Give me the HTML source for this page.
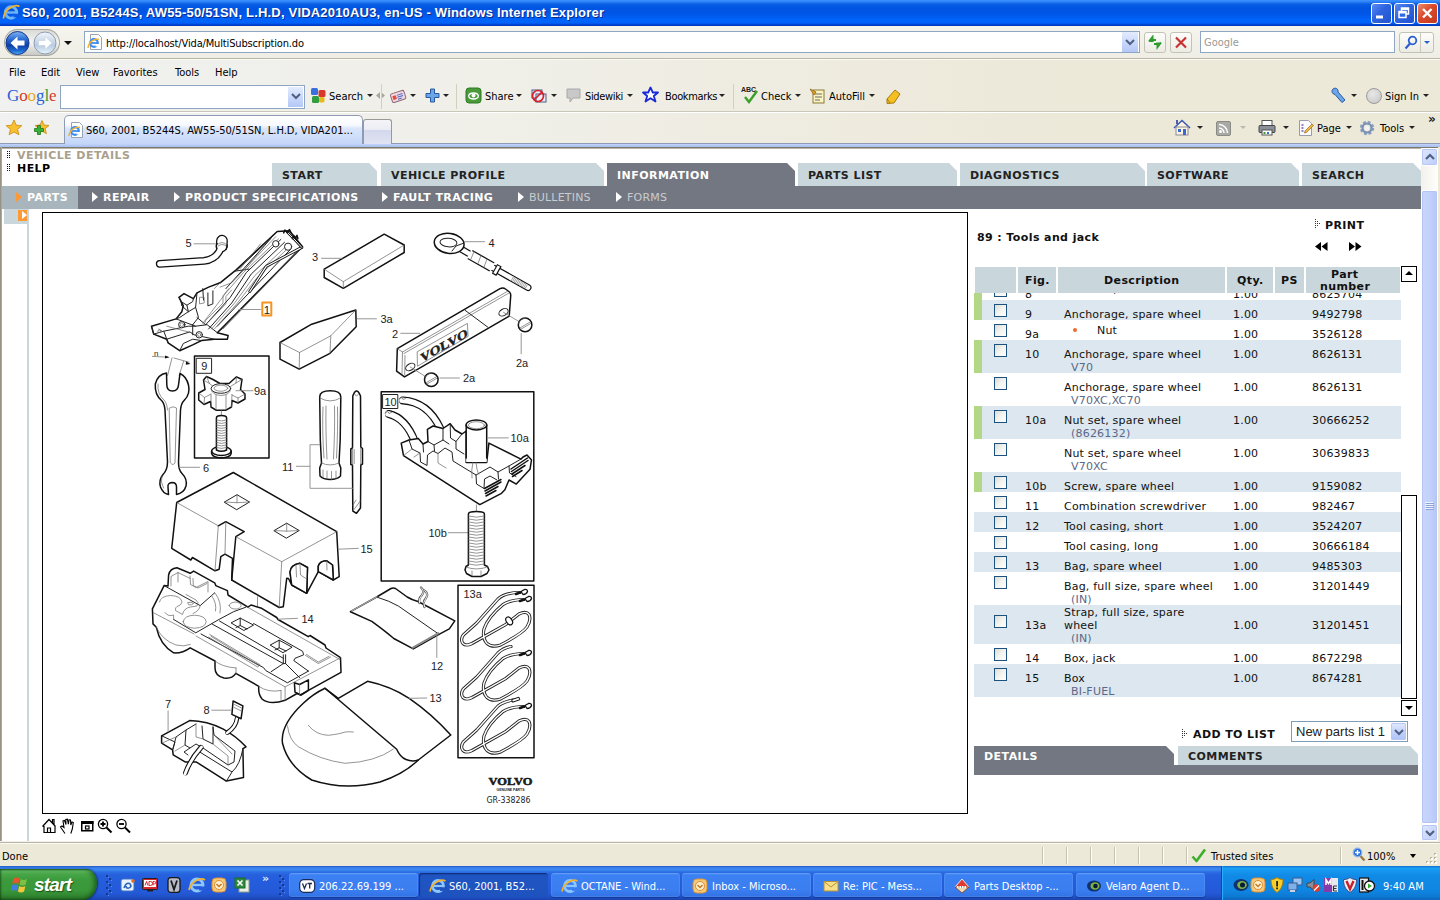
<!DOCTYPE html>
<html><head><meta charset="utf-8"><title>S60, 2001, B5244S</title>
<style>
html,body{margin:0;padding:0}
body{width:1440px;height:900px;overflow:hidden;position:relative;background:#fff;font-family:"DejaVu Sans","Liberation Sans",sans-serif;font-size:11px;color:#000}
.a{position:absolute}
.ui{font-family:"DejaVu Sans Condensed","DejaVu Sans","Liberation Sans",sans-serif;font-size:11px;white-space:nowrap}
.b{font-weight:bold}
.nw{white-space:nowrap}
/* chrome */
#title{left:0;top:0;width:1440px;height:26px;background:linear-gradient(#3d93ff 0,#2a7ff5 2px,#0a5fe3 4px,#0054e0 8px,#0056e6 14px,#0064fc 20px,#0062f8 23px,#0048d4 24.5px,#0034b8 26px)}
#navbar{left:0;top:26px;width:1440px;height:32px;background:linear-gradient(#f6f5ee,#f2f1e9 50%,#efeee5)}
#menubar{left:0;top:59px;width:1440px;height:52px;background:linear-gradient(90deg,#f0f1f0,#f0efe8 35%,#ede9da 70%,#ece9d8)}
#tabrow{left:0;top:112px;width:1440px;height:32px;background:linear-gradient(90deg,#f0f1f0,#f0efe8 35%,#ede9da 70%,#ece9d8)}
</style></head><body>
<div class="a" id="title"></div>
<div class="a" id="navbar"></div>
<div class="a" id="menubar"></div>
<div class="a" id="tabrow"></div>

<style>
#page{left:0;top:144px;width:1440px;height:700px;background:#fff}
.tab{position:absolute;top:163px;height:23px;background:#c9d6dc;font-weight:bold;letter-spacing:.45px;color:#222;line-height:23px;white-space:nowrap;clip-path:polygon(0 0,calc(100% - 8px) 0,100% 8px,100% 100%,0 100%)}
.tab span{position:absolute;left:10px;top:1px}
.tab.sel{background:#737781;color:#fff}
#subbar{left:2px;top:186px;width:1419px;height:23px;background:#737781}
.sm{position:absolute;top:187px;height:22px;line-height:22px;color:#fff;font-weight:bold;letter-spacing:.42px;white-space:nowrap}
.sm i{position:absolute;left:-11px;top:5px;width:0;height:0;border-left:6px solid #fff;border-top:5px solid transparent;border-bottom:5px solid transparent}
.sm.dis{font-weight:normal;color:#c9ccd1;letter-spacing:.2px}
</style>
<div class="a" id="page"></div>
<!--CHROME-->
<svg class="a" style="left:2px;top:3px" width="20" height="20"><circle cx="9" cy="9.500" r="5.700" fill="none" stroke="#6db4f5" stroke-width="3"/><path d="M4.500 9.500h10" stroke="#6db4f5" stroke-width="2.400"/><rect x="11.500" y="10.800" width="6" height="3.500" fill="#0a5ae4"/><path d="M1.500 15.500c.5-9 11-15 16-12" stroke="#f4b22c" stroke-width="1.800" fill="none"/></svg>
<div class="a nw" style="left:22px;top:4px;font:bold 13px/18px 'Liberation Sans',sans-serif;color:#fff;letter-spacing:.19px;text-shadow:1px 1px 0 #0a2a8a">S60, 2001, B5244S, AW55-50/51SN, L.H.D, VIDA2010AU3, en-US - Windows Internet Explorer</div>
<div class="a" style="left:1371px;top:3px;width:19px;height:19px;border:1px solid #fff;border-radius:3px;background:linear-gradient(135deg,#5a8af5,#2e63e0 45%,#2253d0)"></div>
<svg class="a" style="left:1371px;top:3px" width="21" height="21"><path d="M5 14h7" stroke="#fff" stroke-width="3"/></svg>
<div class="a" style="left:1394px;top:3px;width:19px;height:19px;border:1px solid #fff;border-radius:3px;background:linear-gradient(135deg,#5a8af5,#2e63e0 45%,#2253d0)"></div>
<svg class="a" style="left:1394px;top:3px" width="21" height="21"><rect x="7.500" y="5" width="7" height="6" fill="none" stroke="#fff" stroke-width="1.500"/><path d="M7.500 6h7" stroke="#fff" stroke-width="2"/><rect x="5" y="8.500" width="7" height="6" fill="#2e6ae8" stroke="#fff" stroke-width="1.500"/><path d="M5 9.500h7" stroke="#fff" stroke-width="2"/></svg>
<div class="a" style="left:1417px;top:3px;width:19px;height:19px;border:1px solid #fff;border-radius:3px;background:linear-gradient(135deg,#ec8a6a,#d9492a 45%,#c23a1c)"></div>
<svg class="a" style="left:1417px;top:3px" width="21" height="21"><path d="M6 6l8.500 8.500M14.500 6L6 14.500" stroke="#fff" stroke-width="2.400"/></svg>
<div class="a" style="left:0;top:58px;width:1440px;height:1px;background:#bab7a6"></div><div class="a" style="left:0;top:59px;width:1440px;height:1px;background:#fbfaf6"></div>
<div class="a" style="left:4px;top:29px;width:56px;height:27px;border-radius:14px;background:linear-gradient(#d8d8d4,#f4f4f2 50%,#c4c4c0);box-shadow:inset 0 0 0 1px #a8a8a4"></div>
<svg class="a" style="left:5px;top:30px" width="56" height="26"><defs><linearGradient id="bk" x1="0" y1="0" x2="0" y2="1"><stop offset="0" stop-color="#7fb2f2"/><stop offset=".35" stop-color="#2a6bd2"/><stop offset=".6" stop-color="#0f3fa6"/><stop offset=".85" stop-color="#1f6fd6"/><stop offset="1" stop-color="#5ab8f2"/></linearGradient><linearGradient id="fw" x1="0" y1="0" x2="0" y2="1"><stop offset="0" stop-color="#f4f7fb"/><stop offset=".45" stop-color="#c9d6e6"/><stop offset=".6" stop-color="#b9cce2"/><stop offset="1" stop-color="#e6f6fc"/></linearGradient></defs><circle cx="12.500" cy="13" r="11.500" fill="url(#bk)" stroke="#17398a"/><path d="M5.500 13l7-6.500v4h7v5h-7v4z" fill="#fff"/><circle cx="40" cy="13" r="11" fill="url(#fw)" stroke="#8f9db4"/><path d="M47 13l-7-6.500v4h-6.500v5h6.500v4z" fill="#fff" stroke="#c4d0e0" stroke-width=".6"/></svg>
<div class="a" style="left:64px;top:41px;width:0;height:0;border-top:4px solid #111;border-left:4px solid transparent;border-right:4px solid transparent"></div>
<div class="a" style="left:84px;top:31px;width:1054px;height:20px;border:1px solid #8ea6c4;background:#fff"></div>
<svg class="a" style="left:87px;top:33px" width="17" height="18"><path d="M3.500 1.500h8l3 3v12h-11z" fill="#fff" stroke="#9aa4b0"/><circle cx="7" cy="10" r="3.800" fill="none" stroke="#3d8df0" stroke-width="2.200"/><path d="M3.500 10h7.500" stroke="#3d8df0" stroke-width="1.800"/><rect x="8.500" y="11" width="4" height="2.500" fill="#fff"/><path d="M1 15c.5-6 7-10 11-8.500" stroke="#f4b22c" stroke-width="1.400" fill="none"/></svg>
<div class="a ui" style="left:106px;top:37px;line-height:13px;letter-spacing:-.15px">http://localhost/Vida/MultiSubscription.do</div>
<div class="a" style="left:1122px;top:32px;width:16px;height:20px;background:linear-gradient(#e4ecfd,#c6d5fb 60%,#b4c7f6)"></div>
<svg class="a" style="left:1125px;top:39px" width="10" height="7"><path d="M1 1l4 4 4-4" stroke="#4d6185" stroke-width="2" fill="none"/></svg>
<div class="a" style="left:1144px;top:32px;width:20px;height:19px;border:1px solid #c4c2b6;border-radius:3px;background:linear-gradient(#fdfdfb,#ecebe3)"></div>
<div class="a" style="left:1170px;top:32px;width:20px;height:19px;border:1px solid #c4c2b6;border-radius:3px;background:linear-gradient(#fdfdfb,#ecebe3)"></div>
<svg class="a" style="left:1147px;top:35px" width="16" height="15"><path d="M2 6.500l3.500-4.500v3h3.500" stroke="#2f9e2f" stroke-width="2" fill="none"/><path d="M2 7h5l-2.500-4z" fill="#2f9e2f"/><path d="M14 8.500l-3.500 4.500v-3h-3.500" stroke="#2f9e2f" stroke-width="2" fill="none" transform="translate(0,-1)"/><path d="M14 7.500h-5l2.500 4.500z" fill="#2f9e2f"/></svg>
<svg class="a" style="left:1174px;top:36px" width="14" height="13"><path d="M2 1.500l10 10M12 1.500l-10 10" stroke="#c83232" stroke-width="2.200"/></svg>
<div class="a" style="left:1200px;top:31px;width:193px;height:20px;border:1px solid #8ea6c4;background:#fff"></div>
<div class="a ui" style="left:1204px;top:36px;line-height:13px;color:#9a9a94">Google</div>
<div class="a" style="left:1399px;top:32px;width:33px;height:19px;border:1px solid #c4c2b6;border-radius:3px;background:linear-gradient(#fdfdfb,#ecebe3)"></div><div class="a" style="left:1420px;top:33px;width:1px;height:19px;background:#c9c7ba"></div>
<svg class="a" style="left:1403px;top:35px" width="16" height="15"><circle cx="9.500" cy="5.500" r="3.800" fill="none" stroke="#2a5fd0" stroke-width="1.800"/><path d="M7 8.500l-4.500 5" stroke="#2a5fd0" stroke-width="2.200"/></svg>
<div class="a" style="left:1424px;top:41px;width:0;height:0;border-top:3px solid #2a5fd0;border-left:3px solid transparent;border-right:3px solid transparent"></div>
<div class="a ui" style="left:9px;top:66px;line-height:13px">File</div>
<div class="a ui" style="left:41px;top:66px;line-height:13px">Edit</div>
<div class="a ui" style="left:76px;top:66px;line-height:13px">View</div>
<div class="a ui" style="left:113px;top:66px;line-height:13px">Favorites</div>
<div class="a ui" style="left:175px;top:66px;line-height:13px">Tools</div>
<div class="a ui" style="left:215px;top:66px;line-height:13px">Help</div>
<div class="a nw" style="left:7px;top:85px;font:17px/22px 'Liberation Serif',serif;letter-spacing:-.1px"><span style="color:#2a5fd8">G</span><span style="color:#d8382c">o</span><span style="color:#e8a820">o</span><span style="color:#2a5fd8">g</span><span style="color:#2f9e3f">l</span><span style="color:#d8382c">e</span></div>
<div class="a" style="left:60px;top:85px;width:243px;height:22px;border:1px solid #8ea6c4;background:#fff"></div>
<div class="a" style="left:288px;top:87px;width:15px;height:20px;background:linear-gradient(#e4ecfd,#c6d5fb 60%,#b4c7f6)"></div>
<svg class="a" style="left:291px;top:93px" width="10" height="7"><path d="M1 1l4 4 4-4" stroke="#4d6185" stroke-width="2" fill="none"/></svg>
<svg class="a" style="left:310px;top:87px" width="18" height="18"><rect x="1" y="1" width="7" height="7" rx="1.500" fill="#3a6fe0"/><rect x="8.500" y="3" width="7" height="7" rx="1.500" fill="#d8382c"/><rect x="2" y="9" width="7" height="7" rx="1.500" fill="#2f9e3f"/><rect x="9" y="10" width="5.500" height="5.500" rx="1.500" fill="#e8b820"/></svg>
<div class="a ui" style="left:329px;top:90px;line-height:13px;color:#000">Search</div>
<div class="a" style="left:367px;top:94px;width:0;height:0;border-top:3px solid #222;border-left:3px solid transparent;border-right:3px solid transparent"></div>
<svg class="a" style="left:376px;top:92px" width="9" height="8"><path d="M4 0v7L0 3.500zM5 0v7l4-3.500z" fill="#a8a8a0"/></svg>
<div class="a" style="left:381px;top:84px;width:1px;height:25px;background:#d4d0c0"></div>
<svg class="a" style="left:389px;top:87px" width="18" height="18"><g transform="rotate(-18 9 9)"><rect x="2" y="5" width="14" height="9" rx="1.500" fill="#f2d8dc" stroke="#8a6a7a"/><rect x="3.500" y="7.500" width="3.500" height="4" fill="#e84a3a"/><path d="M8 8h6M8 10h6M8 12h4" stroke="#4a6ad0" stroke-width="1"/></g></svg>
<div class="a" style="left:410px;top:94px;width:0;height:0;border-top:3px solid #222;border-left:3px solid transparent;border-right:3px solid transparent"></div>
<svg class="a" style="left:424px;top:87px" width="18" height="18"><path d="M6.500 2h4v4.500H15v4h-4.500V15h-4v-4.500H2v-4h4.500z" fill="#6aa6e8" stroke="#2a5a9e"/></svg>
<div class="a" style="left:443px;top:94px;width:0;height:0;border-top:3px solid #222;border-left:3px solid transparent;border-right:3px solid transparent"></div>
<div class="a" style="left:456px;top:84px;width:1px;height:25px;background:#d4d0c0"></div>
<svg class="a" style="left:465px;top:87px" width="18" height="18"><rect x="1" y="1" width="15" height="15" rx="3" fill="#4a9a3a" stroke="#2f7a24"/><circle cx="8.500" cy="8.500" r="2" fill="#fff"/><path d="M3.500 9c1-4 9-4 10 0M3.500 9c1 4 9 4 10 0" stroke="#fff" stroke-width="1.300" fill="none"/></svg>
<div class="a ui" style="left:485px;top:90px;line-height:13px;color:#000">Share</div>
<div class="a" style="left:516px;top:94px;width:0;height:0;border-top:3px solid #222;border-left:3px solid transparent;border-right:3px solid transparent"></div>
<svg class="a" style="left:530px;top:87px" width="18" height="18"><rect x="2" y="3" width="10" height="8" fill="#e8eef8" stroke="#4a5a8a"/><rect x="6" y="7" width="10" height="8" fill="#e8eef8" stroke="#4a5a8a"/><circle cx="8" cy="9" r="5.500" fill="none" stroke="#d8202a" stroke-width="1.700"/><path d="M4 13l8-8" stroke="#d8202a" stroke-width="1.700"/></svg>
<div class="a" style="left:551px;top:94px;width:0;height:0;border-top:3px solid #222;border-left:3px solid transparent;border-right:3px solid transparent"></div>
<svg class="a" style="left:565px;top:87px" width="18" height="18"><path d="M2 2h13v9H8l-3 4v-4H2z" fill="#c8c8c8" stroke="#a8a8a8"/></svg>
<div class="a ui" style="left:585px;top:90px;line-height:13px;color:#000;letter-spacing:-.35px">Sidewiki</div>
<div class="a" style="left:627px;top:94px;width:0;height:0;border-top:3px solid #222;border-left:3px solid transparent;border-right:3px solid transparent"></div>
<svg class="a" style="left:641px;top:86px" width="19" height="19"><path d="M9.500 1.500l2.300 5h5.200l-4.200 3.500 1.700 5.500-5-3.300-5 3.300 1.700-5.500L2 6.500h5.200z" fill="#fff" stroke="#1a2ad8" stroke-width="1.800" stroke-linejoin="round"/></svg>
<div class="a ui" style="left:665px;top:90px;line-height:13px;color:#000;letter-spacing:-.35px">Bookmarks</div>
<div class="a" style="left:719px;top:94px;width:0;height:0;border-top:3px solid #222;border-left:3px solid transparent;border-right:3px solid transparent"></div>
<div class="a" style="left:733px;top:84px;width:1px;height:25px;background:#d4d0c0"></div>
<svg class="a" style="left:741px;top:85px" width="20" height="20"><text x="0" y="7" font-family="Liberation Sans,sans-serif" font-size="7" font-weight="bold" fill="#333">ABC</text><path d="M4 12l4 5 8-11" stroke="#3aa02a" stroke-width="2.400" fill="none"/></svg>
<div class="a ui" style="left:761px;top:90px;line-height:13px;color:#000">Check</div>
<div class="a" style="left:795px;top:94px;width:0;height:0;border-top:3px solid #222;border-left:3px solid transparent;border-right:3px solid transparent"></div>
<svg class="a" style="left:809px;top:87px" width="18" height="18"><rect x="4" y="3" width="11" height="13" fill="#fbf4c0" stroke="#8a7a3a"/><path d="M6 7h7M6 10h7M6 13h5" stroke="#6a6a6a" stroke-width="1"/><path d="M1 2l6 3-2 3z" fill="#e8a020" stroke="#8a5a10" stroke-width=".7"/></svg>
<div class="a ui" style="left:829px;top:90px;line-height:13px;color:#000">AutoFill</div>
<div class="a" style="left:869px;top:94px;width:0;height:0;border-top:3px solid #222;border-left:3px solid transparent;border-right:3px solid transparent"></div>
<svg class="a" style="left:884px;top:87px" width="18" height="18"><path d="M3 12l8-9 5 4-6 9-7 .5z" fill="#f4c020" stroke="#a87a10"/><path d="M3 12l3 4" stroke="#a87a10"/></svg>
<svg class="a" style="left:1329px;top:86px" width="20" height="20"><path d="M4 3c-2 2-1 5 2 5.500l7 8 3-2.500-7-8c.5-3-2-5-5-3z" fill="#6aa6e8" stroke="#2a5a9e"/></svg>
<div class="a" style="left:1351px;top:94px;width:0;height:0;border-top:3px solid #222;border-left:3px solid transparent;border-right:3px solid transparent"></div>
<div class="a" style="left:1366px;top:88px;width:14px;height:14px;border-radius:8px;border:1px solid #9a9a9a;background:radial-gradient(circle at 40% 35%,#e8e8e8,#c4c4c4)"></div>
<div class="a ui" style="left:1385px;top:90px;line-height:13px;color:#000">Sign In</div>
<div class="a" style="left:1423px;top:94px;width:0;height:0;border-top:3px solid #222;border-left:3px solid transparent;border-right:3px solid transparent"></div>
<div class="a" style="left:0;top:111px;width:1440px;height:1px;background:#c9c7ba"></div><div class="a" style="left:0;top:112px;width:1440px;height:1px;background:#fff"></div>
<svg class="a" style="left:5px;top:119px" width="46" height="18"><path d="M9 1l2.300 5.200 5.500.5-4.200 3.600 1.300 5.500L9 13l-4.900 2.800 1.300-5.500L1.200 6.700l5.500-.5z" fill="#f8c030" stroke="#c88a10" stroke-width=".8"/><path d="M37 1.500l2 4.500 5 .5-3.800 3.200 1.200 5-4.400-2.600-4.400 2.600 1.200-5L30 6.500l5-.5z" fill="#f8c030" stroke="#c88a10" stroke-width=".8"/><path d="M29.500 9.500h3v-3h3v3h3v3h-3v3h-3v-3h-3z" fill="#3ab03a" stroke="#1c7a1c" stroke-width=".8"/></svg>
<div class="a" style="left:64px;top:115px;width:297px;height:31px;border:1px solid #8f9bb5;border-bottom:none;border-radius:5px 5px 0 0;background:linear-gradient(#fff 0,#f6f9fe 30%,#dbe6fb 40%,#bfd3f8 100%)"></div>
<svg class="a" style="left:68px;top:121px" width="17" height="18"><path d="M3.500 1.500h8l3 3v12h-11z" fill="#fff" stroke="#9aa4b0"/><circle cx="7" cy="10" r="3.800" fill="none" stroke="#3d8df0" stroke-width="2.200"/><path d="M3.500 10h7.500" stroke="#3d8df0" stroke-width="1.800"/><rect x="8.500" y="11" width="4" height="2.500" fill="#fff"/><path d="M1 15c.5-6 7-10 11-8.500" stroke="#f4b22c" stroke-width="1.400" fill="none"/></svg>
<div class="a ui" style="left:86px;top:124px;line-height:13px;color:#000">S60, 2001, B5244S, AW55-50/51SN, L.H.D, VIDA201...</div>
<div class="a" style="left:363px;top:119px;width:27px;height:24px;border:1px solid #9a9a94;border-bottom:none;border-radius:3px 3px 0 0;background:linear-gradient(#f4f4f8 0,#ecedf4 40%,#d4d8ec 41%,#dfe3f2 100%)"></div>
<svg class="a" style="left:1172px;top:118px" width="20" height="20"><path d="M2 10l8-7.500 8 7.500" stroke="#3a5ab0" stroke-width="1.600" fill="#fdf4e0"/><rect x="4" y="9" width="12" height="8" fill="#fdf4e0" stroke="#8a8a9a"/><rect x="6" y="11" width="3" height="3" fill="#3a6ad0"/><rect x="11" y="11" width="3" height="6" fill="#3a6ad0"/><path d="M5 2v4" stroke="#2a3a9a" stroke-width="1.600"/></svg>
<div class="a" style="left:1197px;top:126px;width:0;height:0;border-top:3px solid #222;border-left:3px solid transparent;border-right:3px solid transparent"></div>
<div class="a" style="left:1216px;top:121px;width:13px;height:13px;border-radius:2px;background:#a8a8a4;border:1px solid #8a8a86"></div><svg class="a" style="left:1217px;top:122px" width="13" height="13"><circle cx="3.500" cy="9.500" r="1.500" fill="#fff"/><path d="M2 6a5 5 0 015 5M2 2.500a8.500 8.500 0 018.500 8.500" stroke="#fff" stroke-width="1.500" fill="none"/></svg>
<div class="a" style="left:1240px;top:126px;width:0;height:0;border-top:3px solid #b8b8b0;border-left:3px solid transparent;border-right:3px solid transparent"></div>
<svg class="a" style="left:1258px;top:119px" width="18" height="18"><rect x="4" y="1.500" width="10" height="6" fill="#fff" stroke="#555"/><rect x="1" y="6.500" width="16" height="7" rx="1" fill="#8a8f9a" stroke="#444"/><rect x="4" y="11" width="10" height="5" fill="#fff" stroke="#555"/><rect x="5.500" y="13" width="2" height="2" fill="#3a9a3a"/><rect x="9" y="13" width="2" height="2" fill="#3a6ad0"/></svg>
<div class="a" style="left:1283px;top:126px;width:0;height:0;border-top:3px solid #222;border-left:3px solid transparent;border-right:3px solid transparent"></div>
<svg class="a" style="left:1297px;top:119px" width="18" height="18"><path d="M2.500 1.500h9l3 3v12h-12z" fill="#fbfbfd" stroke="#9a9aaa"/><path d="M4.500 6h2M4.500 9h2M4.500 12h2" stroke="#7a5ab0" stroke-width="1.500"/><path d="M8 12l7-7 1.500 1.500-7 7-2 .5z" fill="#f0b840" stroke="#9a6a20" stroke-width=".7"/></svg>
<div class="a ui" style="left:1317px;top:122px;line-height:13px;color:#000">Page</div>
<div class="a" style="left:1346px;top:126px;width:0;height:0;border-top:3px solid #222;border-left:3px solid transparent;border-right:3px solid transparent"></div>
<svg class="a" style="left:1358px;top:119px" width="18" height="18"><circle cx="9" cy="9" r="5.500" fill="none" stroke="#8aa0c0" stroke-width="3.400" stroke-dasharray="2.600 1.720"/><circle cx="9" cy="9" r="4.500" fill="none" stroke="#7a90b4" stroke-width="2.200"/><circle cx="9" cy="9" r="2.200" fill="#f0f4fa"/></svg>
<div class="a ui" style="left:1380px;top:122px;line-height:13px;color:#000">Tools</div>
<div class="a" style="left:1409px;top:126px;width:0;height:0;border-top:3px solid #222;border-left:3px solid transparent;border-right:3px solid transparent"></div>
<div class="a" style="left:1428px;top:113px;font:bold 12px/12px 'DejaVu Sans',sans-serif;letter-spacing:-1px;color:#222">»</div>

<div class="a" style="left:0;top:143px;width:65px;height:1px;background:#8f9bb5"></div><div class="a" style="left:391px;top:143px;width:1049px;height:1px;background:#8f9bb5"></div>
<div class="a" style="left:0;top:144px;width:1440px;height:3px;background:linear-gradient(#c4d5fa,#b3c8f5 50%,#a9bdee)"></div>
<div class="a" style="left:0;top:147px;width:1440px;height:1px;background:#7d7a6e"></div><div class="a" style="left:0;top:148px;width:1421px;height:1px;background:#b9b6a9"></div>
<div class="a" style="left:0;top:147px;width:2px;height:697px;background:linear-gradient(90deg,#8d897b,#b5b1a3)"></div>
<div class="a" style="left:1438px;top:147px;width:2px;height:697px;background:#ece9d8"></div>
<!-- grip + links -->
<div class="a b nw" style="left:17px;top:149px;line-height:14px;color:#a9a08c;letter-spacing:.45px">VEHICLE DETAILS</div>
<div class="a b nw" style="left:17px;top:162px;line-height:14px;color:#000;letter-spacing:.45px">HELP</div>
<svg class="a" style="left:7px;top:150px" width="5" height="24"><g fill="#111"><rect x="0" y="1" width="1" height="1"/><rect x="2" y="1" width="1" height="1"/><rect x="0" y="3" width="1" height="1"/><rect x="2" y="3" width="1" height="1"/><rect x="0" y="5" width="1" height="1"/><rect x="2" y="5" width="1" height="1"/><rect x="0" y="7" width="1" height="1"/><rect x="2" y="7" width="1" height="1"/><rect x="0" y="14" width="1" height="1"/><rect x="2" y="14" width="1" height="1"/><rect x="0" y="16" width="1" height="1"/><rect x="2" y="16" width="1" height="1"/><rect x="0" y="18" width="1" height="1"/><rect x="2" y="18" width="1" height="1"/><rect x="0" y="20" width="1" height="1"/><rect x="2" y="20" width="1" height="1"/></g></svg>
<!-- tabs -->
<div class="tab" style="left:272px;width:105px"><span>START</span></div>
<div class="tab" style="left:381px;width:223px"><span>VEHICLE PROFILE</span></div>
<div class="tab sel" style="left:607px;width:188px"><span>INFORMATION</span></div>
<div class="tab" style="left:798px;width:159px"><span>PARTS LIST</span></div>
<div class="tab" style="left:960px;width:185px"><span>DIAGNOSTICS</span></div>
<div class="tab" style="left:1147px;width:152px"><span>SOFTWARE</span></div>
<div class="tab" style="left:1302px;width:119px"><span>SEARCH</span></div>
<div class="a" id="subbar"></div>
<div class="a" style="left:2px;top:186px;width:76px;height:23px;background:#a8b5bc"></div>
<div class="sm" style="left:27px">PARTS<i style="border-left-color:#f93"></i></div>
<div class="sm" style="left:103px">REPAIR<i></i></div>
<div class="sm" style="left:185px">PRODUCT SPECIFICATIONS<i></i></div>
<div class="sm" style="left:393px">FAULT TRACING<i></i></div>
<div class="sm dis" style="left:529px">BULLETINS<i></i></div>
<div class="sm dis" style="left:627px">FORMS<i></i></div>
<!-- left strip -->
<div class="a" style="left:4px;top:209px;width:25px;height:15px;background:#c9d6dc"></div>
<div class="a" style="left:27px;top:209px;width:2px;height:635px;background:#c9d6dc"></div>
<div class="a" style="left:18px;top:210px;width:9px;height:11px;background:#f93"></div>
<div class="a" style="left:22px;top:211px;width:0;height:0;border-left:5px solid #fff;border-top:4.5px solid transparent;border-bottom:4.5px solid transparent"></div>
<!-- diagram frame -->
<div class="a" id="frame" style="left:42px;top:212px;width:924px;height:600px;border:1px solid #000;background:#fff;overflow:hidden">
<!--DIAGRAM_START-->
<svg style="position:absolute;left:0;top:0" width="924" height="600" viewBox="43 213 924 600" fill="none" stroke-linejoin="round" stroke-linecap="round" font-family="Liberation Sans, sans-serif" font-size="11">
<style>.k{stroke:#111;stroke-width:1.500}.m{stroke:#222;stroke-width:1}.n{stroke:#666;stroke-width:.700}.l{stroke:#8a8a8a;stroke-width:.900}.w{fill:#fff}text{fill:#222;stroke:none}</style>
<!-- part 5 tube -->
<path d="M221.500 246.500L222 240.700" stroke="#111" stroke-width="11.800"/>
<path d="M159.700 263.800L204 260.900Q216 259.500 220.500 249" stroke="#111" stroke-width="7.800"/>
<path d="M221.500 246.500L222 240.700" stroke="#fff" stroke-width="9.200"/>
<path d="M159.700 263.800L204 260.900Q216 259.500 220.500 249" stroke="#fff" stroke-width="5.200"/>
<path d="M216.800 248.500q-1-3 .5-5M226.200 249.500q1.500-2.500 1-5" stroke="#111" stroke-width="1.200"/>
<path d="M217.500 244.500q4.500-4 9 0M218.200 246q4-3.200 8 0" class="n" stroke="#999"/>
<path d="M194 243.800h21" class="l"/><text x="185.500" y="247">5</text>
<!-- jack 1 -->
<path class="k w" d="M277.200 231.500L289.500 230.800L302.500 246.700L217.300 332.700L228.100 335.500L227.400 339.200L214.400 339.200L201.400 340.600L192.700 344.900L179.700 350.700L168.100 342.800L166.700 339.200L153.700 334.100L151.500 326.200L176.100 318.900L181.800 311.700L183.300 305.900L179 297.300L184 293.600L193.400 298.700L197 292.900L208.600 287.100L220.100 282.800L234.600 271.200Z"/>
<path class="m" d="M270.7 238.7L225.9 288.6M280.8 239.5L246.2 272.7L230.3 297.3L205.7 324.7M284.5 242.3L251.2 274.1L231.7 303.0L208.6 329.0M291.0 248.8L217.3 326.2M296.0 252.5L220.1 330.5M234.6 271.2L249.0 269.1M275.1 233.7L237.5 269.8M179.0 297.3L181.1 301.6L186.9 305.2L192.7 301.6L193.4 298.7M181.1 301.6L181.8 305.9L188.4 311.7M186.9 305.2L188.4 311.7L195.6 307.4L197.0 292.9M207.9 292.9L207.9 305.9L212.9 303.8L212.9 290.8M202.8 288.6L203.5 300.1M151.5 326.2L153.7 334.1M176.1 318.9L195.6 326.2L207.1 324.7L217.3 332.7M153.7 334.1L163.8 331.2L188.4 326.2L195.6 326.2M166.7 339.2L189.8 331.9L194.1 334.8L214.4 339.2M179.7 350.7L183.3 343.5L192.7 339.2L201.4 340.6M163.8 331.2L168.1 342.8M192.7 324.7L192.7 334.8M188.4 311.7L179.7 317.5L176.1 318.9M197.0 317.5L205.7 324.7M195.6 307.4L198.5 317.5L192.7 324.7"/>
<path class="n" d="M275.8 236.6L231.7 282.8L220.1 287.1M278.7 238.7L243.3 272.7L225.9 292.9L202.8 323.3M287.3 245.2L254.8 275.6L234.6 303.0L211.5 329.0M289.5 246.7L256.3 278.5L237.5 303.0L214.4 329.0M299.6 249.6L223.0 329.0M260.6 243.8L240.4 268.4M264.9 245.2L244.7 269.8M228.8 288.6L223.0 295.8L223.0 303.0L205.7 320.4L204.2 324.7M231.7 290.0L225.9 296.5L225.9 303.8L208.6 321.8M199.9 297.3L204.2 297.3L204.2 303.0L199.9 303.8ZM214.4 288.6L220.1 282.8M158.7 329.0L162.3 331.2M166.7 326.2L191.2 332.7"/>
<path d="M301.8 247.4L266.4 266.2L249.8 291.5" stroke="#111" stroke-width="2.900"/><path d="M301.8 247.4L266.4 266.2L249.8 291.5" stroke="#fff" stroke-width="1.200"/>
<path d="M287.3 232.2L293.8 238.7L301.8 247.4" stroke="#111" stroke-width="2.600"/><path d="M287.3 232.2L293.8 238.7L301.8 247.4" stroke="#fff" stroke-width="1"/>
<path class="k" stroke-width="1.200" d="M283.7 232.9L284.9 230.1L287.3 232.2L289.5 229.6L290.7 232.2M292.4 238.7L293.8 235.8L295.6 238.0L297.0 235.4L297.9 238.7"/>
<circle class="m w" cx="275.8" cy="243.8" r="3.2"/><circle class="m w" cx="288.1" cy="246.7" r="3.6"/><circle class="m w" cx="181.8" cy="324.7" r="3.2"/><circle class="m w" cx="199.2" cy="334.8" r="3.2"/><circle class="n" cx="199.2" cy="334.8" r="1.600"/><circle class="n" cx="181.8" cy="324.7" r="1.800"/>
<ellipse class="n" cx="159.5" cy="331.2" rx="1.800" ry="1.200"/>
<rect x="262.300" y="302.600" width="9" height="13" stroke="#f7941d" stroke-width="2" fill="#fff"/><text x="263.800" y="313.500" font-size="11.500">1</text>
<path d="M239 309.500h21.500" class="l"/>
<!-- part 3 -->
<path class="k w" d="M384.200 234.200L404.200 245L404.200 252.500L343.300 288.300L324.200 277.500L324.200 269.200Z"/>
<path class="n" d="M324.200 269.200L343.300 281.700L404.200 245M343.300 281.700L343.300 288.300"/>
<path d="M321.500 258.300h20.500" class="l"/><text x="312" y="261">3</text>
<!-- part 3a -->
<path class="k w" d="M355.800 310L356.200 326.700L330 353.300L299.200 369.200L280 359.200L280 342.500L311.700 324.200Z"/>
<path class="n" d="M355.800 310L330.800 335.800L299.500 352.500L280 342.500M330.800 335.800L330 353.300M299.500 352.500L299.200 369.200"/>
<path d="M357.500 318.800h19" class="l"/><text x="380.500" y="322.500">3a</text>
<!-- part 4 towing eye -->
<path d="M461 249L496 269.500L528 287.500" stroke="#111" stroke-width="7"/><path d="M461 249L496 269.500L528 287.500" stroke="#fff" stroke-width="4.600"/>
<path d="M470 254.500L492 267" stroke="#111" stroke-width="10.500" stroke-linecap="butt"/><path d="M469 254L493 267.600" stroke="#fff" stroke-width="8" stroke-linecap="butt"/>
<path d="M494.500 268.700L499 271.200" stroke="#111" stroke-width="11" stroke-linecap="butt"/><path d="M495.500 269.200L498 270.600" stroke="#fff" stroke-width="8.600" stroke-linecap="butt"/>
<path d="M512 278.500L527 287" stroke="#999" stroke-width="5" stroke-dasharray=".8 .8" stroke-linecap="butt"/>
<path class="n" d="M474 251.500l-3 7.500M481 255.500l-3 8M487 259l-3 8"/>
<ellipse class="k w" cx="449.200" cy="243.300" rx="15" ry="10" transform="rotate(8 449 243)"/><ellipse class="m w" cx="448.500" cy="242.500" rx="8.500" ry="4.300" transform="rotate(5 448 242)"/>
<path class="m" d="M452 251l4-5 8-3"/>
<path d="M464.500 241.700h20" class="l"/><text x="488.500" y="246.500">4</text>
<!-- part 2 volvo case -->
<path class="k w" d="M397.300 348.700L500 288.700Q503 287 505.500 289L509.500 292Q511 293.500 510.700 296L509.200 316.200L404.500 376.900L396.600 371.100Z" stroke-width="1.800"/>
<path class="n" d="M397.300 348.700L402.500 352L508 291M402.500 352L402 374M404 353.500L509 293M405 355.500L404.700 375"/>
<path class="m" d="M465.200 310.400L487.600 327"/>
<path class="n" d="M417.500 351.600L467.400 323.400L468.100 336.400L417.800 366Z"/>
<ellipse class="m w" cx="410.300" cy="367" rx="5" ry="3.200" transform="rotate(-30 410.300 367)"/><ellipse class="m w" cx="503.500" cy="312.300" rx="5" ry="3.200" transform="rotate(-30 503.500 312.300)"/>
<text x="0" y="0" transform="translate(421.500 362.500) rotate(-29.500) skewX(-18) scale(1.320 1)" font-family="Liberation Serif, serif" font-weight="bold" font-size="11.500" fill="#111" style="text-rendering:geometricPrecision;stroke:#111;stroke-width:.35px">VOLVO</text>
<path class="l" d="M410.300 367L424.800 376.100M503.500 312.300L518.600 321.300"/>
<circle class="k w" cx="431.300" cy="379.700" r="6.800" stroke-width="1.200"/><path class="n" d="M426.500 382.500l9.500-5.500M427 384l10-5.800M424.700 378q2-5 8-5.300"/>
<circle class="k w" cx="525.100" cy="324.900" r="6.800" stroke-width="1.200"/><path class="n" d="M520.300 327.700l9.500-5.500M520.800 329.200l10-5.800M518.500 323.200q2-5 8-5.300"/>
<path class="l" d="M439.900 378h19.500M521.200 333.500v20.300M400.800 333.300h19"/>
<text x="463" y="382">2a</text><text x="516" y="366.500">2a</text><text x="392" y="337.500">2</text>
<!-- n dimension -->
<text x="154" y="355.500" font-size="8">n</text>
<path class="n" d="M152.400 356.400L168 357.200M174 358L188.900 362.200M172 357.800L167.600 375.600M183.600 361.300L179.100 375.600"/>
<path d="M169.500 357.300l-4.500-1.700v3zM186 361.300l4.500 2.600-4.700.8z" fill="#111" stroke="none"/>
<!-- wrench 6 -->
<path class="k w" d="M166.500 373Q157.500 374.500 155.300 384Q154.500 395 162 401Q164.500 404 165 410L167.500 462Q167.500 470 163 474.500Q158.500 480 160.500 487Q163 493.500 168.500 494.500L168 487Q167.500 483 172 482.500Q176.500 482.500 176.500 487L176.500 494.500Q184 493 186 486Q187.500 479 182 473.500Q178.500 470 178.500 462L180.500 410Q181 403.500 184.500 400Q190.500 394 188.500 385Q186.500 376.500 180 373.500L178.500 385Q178 391 172.500 391Q167 391 166.800 385Z"/>
<path class="n" d="M169.500 408Q173 405.500 176.500 408L175 463Q173 466 170.500 463ZM158 384Q157 394 164 400Q167 403 167.500 410M162 476Q160 482 163.500 488"/>
<path d="M179.500 467.300h20" class="l"/><text x="203" y="471.500">6</text>
<!-- box 9 -->
<rect class="k" x="194.500" y="356" width="74.500" height="102" stroke-width="1.300"/>
<rect class="m" x="196.600" y="358.300" width="15" height="15" stroke-width=".9"/><text x="201.300" y="370.300">9</text>
<path class="k w" stroke-width="1.200" d="M198.700 393L205 389.500L203.500 380L206.500 376.500L213 379.500L220 383.500L229 383.500L236.500 376.800L242 379.500L240.500 389.500L245 394L245 399L238 403L232 400.500L231.500 407L226 410.200L216 410.200L211 407L210.500 401.500L204 404.500L198.700 400Z"/>
<path class="n" d="M198.700 393L204.500 397.500L211 394M204.500 397.500L204 404.500M245 394L238 398L232 395M238 398L238 403M203.500 380L209.500 383.500L212.500 386M209.500 383.500L206.500 376.500M242 379.500L236 383L230.500 386.500M236 383L236.500 376.800M211 394.500L211 407M232 394.500L231.500 407M216 395L216 410M226 395L226 410"/>
<ellipse class="m w" cx="220.900" cy="388.500" rx="9.800" ry="4.800"/><ellipse class="n" cx="220.900" cy="388.200" rx="6.800" ry="3"/>
<path class="n" d="M211.100 389Q212 395 220.900 395.500Q230 395 230.700 389"/>
<path d="M236 390.700h17" class="l"/><text x="254" y="395">9a</text>
<path class="n" d="M221.400 410.500v5"/>
<ellipse class="k w" cx="221.400" cy="451" rx="9.800" ry="4.400" stroke-width="1.200"/><path class="k" stroke-width="1.200" d="M211.600 451v2.500q1 4 9.800 4.400q8.800-.4 9.800-4.400V451"/>
<path class="k w" stroke-width="1.100" d="M216.400 450V418Q216.400 415.500 221.400 415.500Q226.600 415.500 226.600 418V450Q221.500 452.500 216.400 450Z"/>
<path class="n" d="M216.400 420q5 2 10.200 0M216.400 422.500q5 2 10.200 0M216.400 425q5 2 10.200 0M216.400 427.500q5 2 10.200 0M216.400 430q5 2 10.200 0M216.400 432.500q5 2 10.200 0M216.400 435q5 2 10.200 0M216.400 437.500q5 2 10.200 0M216.400 440q5 2 10.200 0M216.400 442.500q5 2 10.200 0M216.400 445q5 2 10.200 0M216.400 447.500q5 2 10.200 0"/>
<!-- screwdriver 11 -->
<path class="k w" d="M319.700 397Q319.700 390.800 330.200 390.800Q340.800 390.800 340.800 397L340.200 440L339 463L340.800 468L340.500 476Q337 479.500 330.200 479.500Q323.500 479.500 320 476L319.700 468L321.500 463L320.300 440Z"/>
<path class="n" d="M320 398Q330 404 340.500 398M323 407Q322 430 324 458M326 406Q325.500 430 327 459M337.500 407Q338 430 336.500 458M334.500 406Q335 430 333.500 459M321.500 463Q330 467 339 463M323 470v7M327 471v8M331.500 471.500v8M336 471v7.500"/>
<path class="k w" stroke-width="1.200" d="M352.800 396Q356.500 386 360.500 396L360.800 447L362.500 448.500L362.500 464L360.800 465L360.500 508L356.500 513.300L352.800 511L352.500 465L350.800 464.500L350.800 449L352.500 448Z"/>
<path class="n" d="M354.500 394q2 4 4 0M352.600 448L352.600 465M354.200 449.500v14M360.700 448v17M352.800 511l7.500-10M356 500l-3 5"/>
<path class="l" d="M319.700 444.700H310V488.300H352.500M296.300 466.300H309.700"/><text x="282" y="470.500">11</text>
<!-- box 10 -->
<rect class="k" x="381.200" y="391.800" width="152.600" height="189.200" stroke-width="1.300"/>
<rect class="m" x="383" y="394.500" width="14.800" height="14" stroke-width=".9"/><text x="384.500" y="405.800">10</text>
<path d="M389 414Q406 418 415 442" stroke="#111" stroke-width="8"/><path d="M388 413.800Q406 418 415.500 443" stroke="#fff" stroke-width="5.600"/>
<path d="M403 400.500Q428 402 440 428" stroke="#111" stroke-width="8"/><path d="M402 400.300Q428 402 440.500 429" stroke="#fff" stroke-width="5.600"/>
<path class="n" d="M399 399l3-1.500 1 2 2.500-1M385 413l3-1.500 1 2 2.500-1"/>
<path class="k w" d="M401.200 443.100L409 440L418.300 438.600L423 444L428 441.500L427.400 429.400L433 426L443 428.500L450.200 423.700L455 430L462 434L466.200 431V462.500L486.700 462.500L488.900 443.100L520.900 459.100L523 457L527 455L531.500 460L530 469.300L516.300 484.100L509 480L504.900 489.800L501.500 493.300L479.800 504.600L403.500 455.600Z"/>
<path class="m" d="M409 440L412 449L420 453L420.500 462L427 465.500L427.500 455L433 451L438 453.500L445 448L452 452L453 461L476 475L476.500 484L484 488.500L484.500 479L490 476L497 480M423 444L423.500 452M428 441.500L434 445L443 440L443 428.500M434 445L434.500 451M450.200 423.700L450.500 438L456 441.500L462 434M456 441.500L456 449L464 454M443 440L449 444M466.200 462.500Q468 457 472 456M486.700 462.500Q484.500 457 480 456M476 475L490 467L498 472L509 466L520.900 459.100M498 472L498.500 479M509 466L509.500 473L516 476.500"/>
<path class="n" d="M412 449L403.500 455.600M420 453L414 457M438 453.500L438 463L446 468M473 462Q471 470 472 478M476 462Q476.500 470 478.500 474"/>
<path class="w" stroke="none" d="M466.200 425V462H486.700V425Z"/><path class="k" stroke-width="1.200" d="M466.200 425V458M486.700 425V458"/><ellipse class="k w" stroke-width="1.200" cx="476.400" cy="424.900" rx="10.300" ry="5"/><ellipse class="n" cx="476.400" cy="425.200" rx="8" ry="3.500"/>
<path class="k" stroke-width="1.100" d="M484.500 488.500L501 479.500M485 491L501 482M485.500 493.500L498 486.500M486 496L496 490.500M511 469L527.500 458M511.500 471.500L528 460.500M512 474L525 465.500M512.500 476.500L522 470.500"/>
<path class="l" d="M487.800 437.900h20.500M448.400 532.700h19.600"/><text x="510.500" y="441.500">10a</text><text x="428.500" y="536.500">10b</text>
<path class="n" d="M476.400 505v6.500"/>
<path class="k w" stroke-width="1.100" d="M468.400 565V514Q468.400 511.500 476.400 511.500Q484.400 511.500 484.400 514V565L487.500 566.500L489 570L487 573.500L481 576.500L472 576.500L466.500 573.500L465 570L466 566.500Z"/>
<path class="n" d="M468.400 516q8 2.500 16 0M468.400 519q8 2.500 16 0M468.400 522q8 2.500 16 0M468.400 525q8 2.500 16 0M468.400 528q8 2.500 16 0M468.400 531q8 2.500 16 0M468.400 534q8 2.500 16 0M468.400 537q8 2.500 16 0M468.400 540q8 2.500 16 0M468.400 543q8 2.500 16 0M468.400 546q8 2.500 16 0M468.400 549q8 2.500 16 0M468.400 552q8 2.500 16 0M468.400 555q8 2.500 16 0M468.400 558q8 2.500 16 0M468.400 561q8 2.500 16 0M468.400 564q8 2.500 16 0M466 567q10 4 21.500 0M472 576v-5M481 576v-5"/>
<!-- cover 15 -->
<path class="k w" d="M233.300 472.500L336.700 531.700L339.200 576.700L333.300 580L318.300 571.700L318.300 566Q320 561 326.700 560.800L332.500 565L333.300 580L318.300 571.700L306.700 593.300L291.700 585L290 572Q290.500 565 300 563.300L307.500 567.500L306.700 593.300L291.700 585L288.500 578.500L286.700 578.300L283.300 606.700L279.200 607.500L231.700 580L232.500 558.300L225 554.200L220.800 556.700L219.200 569.200L215 570.800L192.500 557.500L190.800 560L171.700 548.300L176.700 502.500Z"/>
<path class="k w" d="M318.300 571.700L318.300 566Q320 561 326.700 560.800L332.500 565L333.300 580Z" stroke-width="1.300"/>
<path class="k w" d="M291.700 585L290 572Q290.500 565 300 563.300L307.500 567.500L306.700 593.300Z" stroke-width="1.300"/>
<path class="k" d="M235.800 536.700L244.200 531.700L225.800 521.700L218.300 525.800M231.700 580L235.800 536.700" stroke-width="1.300"/>
<path class="n" d="M176.700 502.500L218.300 525.800L215 570.800M225.800 521.700L225 554.200M235.800 536.700L281.700 561.700L336.700 531.700M281.700 561.700L279.200 607.500M300 563.300L300.500 575L306.700 579M296 565.500L296.500 577M326.700 560.800L327 570"/>
<path class="m w" stroke-width=".9" d="M224.500 502L237 494.700L249.500 502L237 509.500ZM274.200 530.500L286.700 523.200L299.200 530.500L286.700 538Z"/>
<path class="n" d="M237 494.700v8l-12.500-.7M237 502.700l12.500-.7M286.700 523.200v8l-12.500-.7M286.700 531.200l12.500-.7"/>
<path class="l" d="M339.200 549.200L358.300 548.300"/><text x="360.500" y="552.500">15</text>
<path class="n" d="M257.500 596.700V634"/>
<!-- tray 14 -->
<path class="k w" d="M168 586.100L168.600 575Q170 568.500 176.900 567.800L190.200 573.300L193.600 571.100L214.700 582.800L215.800 585.600L227.400 590.600L228 595L248 607.200L251 605L261.700 608.300L276.700 617.500L278 619.500L308.300 636.700L310 635.500L325 645L326 648L340.500 657.700L341 672.300L308.400 690.400L300.800 695L297 693.500L285.100 700.300Q270 705.500 262 699Q258 694 258.800 686.300L235.800 673.300Q232 679 224 678Q215 676 215 668L215 661L190.200 647.800Q182 653.500 173.600 652.800Q160 645 156.300 627.200L153 623.900L152.400 608.900L164.100 585.600Z"/>
<path class="m" d="M164.100 585.600L200.200 605.600L214.700 592.800M173.600 619.400L195.800 632.800L219.100 619.400L233.600 611.700L245.800 607.200M219.500 621L283.300 658.300M212 624L283.300 663.600M201 634L263.500 667.600L265.800 670.600L287.400 682.800L308.400 671.100M253.600 623.500L302.600 651.300L303.700 654.800L295 658.300L293.800 660.600L308.400 671.100M271.100 671.700L283.300 663.600L285.600 663.600L299.600 677.600M283.300 654.800V663.600M285.600 654.800V663.600M231.400 622.700L240.200 618.100L253.600 625.100L244.200 630.300ZM240.200 618.100V625.500L236 627.500M240.200 625.500L247 629M270.500 644.900L279.200 640.200L292.100 647.200L283.300 652.500ZM279.200 640.200V647.800L275 650M279.200 647.800L286 651"/>
<path class="k" stroke-width="1.200" d="M294.400 682.800L299.600 684.500L308.400 679.900V690.400L300.800 695L295 692.100Z"/>
<path class="n" d="M299.600 684.500V695M247.200 607L339.900 659.500M305.500 655.400L318.300 663.600L330.500 657.100M306.500 654.500L318.300 662L329 656.300M209.700 634.400L260 664.700L257.700 667.100L208.600 637M211 636.300L258.500 665.500M285.100 686.900V700.300M340.500 657.700L285.100 686.900L196 636M258.800 686.300Q268 693 281 690.500M215 661Q222 667 236 668M236 668v6M281 690.500v9M156.300 627.200Q162 640 176 645Q184 647 190.200 644.500M153.600 612.800L194 634M171 586V576.500L178 572.500L190.200 578.500M178 572.500V582M190 576L190.500 584.500L196 587.500L208 581.500V592M193 578.500L193.300 585.500L198 588L207 583.500M215 593Q222 602 220 613M211.500 595.500Q217 603 215.500 611M200.200 605.600Q199.500 611 193 613.500"/>
<path class="n" d="M159.500 602Q160.500 596 170.800 595.500Q181 596 182 602Q181.500 605.500 177 606.500Q175 607.500 175.500 610.500L182.500 614.500Q184 608 190.500 607L197 606Q199.500 602.500 196 600L186 594.500M165 612.500Q168 617 173.600 615L173.600 619.400M183.200 621.700Q184 615.500 194.700 615.200Q205.500 615.800 206.200 621.700Q205.500 627.700 194.700 628.200Q184 627.700 183.200 621.700ZM188 602.500Q191.500 601.500 193.500 603.500Q192 605.500 189 604.800ZM229.200 605.600Q230 602.300 235.200 602.100Q240.500 602.400 241.200 605.600Q240.500 608.800 235.200 609.100Q230 608.800 229.200 605.600Z"/>
<path class="l" d="M278.300 619.200L297.500 618.300"/><text x="301.500" y="623">14</text>
<!-- part 7 / 8 -->
<path class="k w" d="M161.600 735.800L189.700 720.600Q207 721 223.300 729.100Q236 736 246 746.800L242.900 748.700L243.500 777.400L226.400 781.100L196.500 762.100L185.500 762.100L173.200 754.800L172.600 749.900L161.600 743.200Z"/>
<path class="m" d="M242.900 748.700Q240 765 232 772L196.500 750M232 772L226.400 781.100M196 724L186 730L185 745L190 748L196 744L203 748M203 748L228 765L234 762L235 751L214 735L213 727M186 730L176 737L173 749M161.600 735.800L175 742L172.600 749.900M202 726L203 739L213 744L213 727M190 748L184 752L188 755"/>
<path class="n" d="M196 724L196 737L203 739M176 737L161.600 743.200M185 745L175 751M213 744L228 756L228 765M214 735L232 754"/>
<path d="M185.500 773Q190 760 201 747.500" stroke="#111" stroke-width="5"/><path d="M185 774Q190 760 201.500 747" stroke="#fff" stroke-width="2.800"/>
<path d="M237 718.500Q236 727 227.500 732.500" stroke="#111" stroke-width="4.600"/><path d="M237 718Q236 727 227 733" stroke="#fff" stroke-width="2.400"/>
<path class="k w" stroke-width="1.300" d="M233.100 701L242.900 705.900L241.100 718.700L231.900 714.400Z"/><path class="n" d="M234.500 704.500l7 3.500M234.200 707.500l7 3.500"/>
<path class="l" d="M168.100 710.800V731.600M211.700 710.200H231.700"/><text x="165" y="708">7</text><text x="203.500" y="713.500">8</text>
<!-- bag 13 -->
<path class="k w" d="M325 688.300L338.300 698.300L367.500 681.300Q390 686 409.200 698.300Q432 714 450.800 735L418.300 760Q404 774 380 782Q345 791 311.700 780Q288 766 282.500 743.300Q280 725 303.300 703.300Q313 694 325 688.300Z"/>
<path class="k" d="M325 688.300L396.700 749.200Q400 757 406 759.500Q412 762 418.300 760"/>
<path class="n" d="M287.500 725.800Q289 740 298.300 746.700Q320 760 345 763.300Q375 762 393.300 749.200M308.300 725.300Q316 735 328.300 735.300Q340 734 345 732Q350 731.500 353.300 732"/>
<path class="l" d="M409.200 698.300L426.700 698"/><text x="429.500" y="702">13</text>
<!-- pouch 12 -->
<path class="k w" stroke-width="1.200" d="M350.400 611.700L376.700 597L391 588.500Q393.100 587.300 395.500 588.500L407.200 597Q412 600 418 601.500L454.800 620.800L449.300 628.800L439 634.300L413.300 648.900L393.800 638.500Q385 631 371.800 621.400Q362 617 350.400 611.700Z"/>
<path class="m" d="M376.700 597Q390 601 398.600 606.200L439 634.300"/>
<path d="M412.500 647.800L438.500 633.200" stroke="#888" stroke-width="2"/><path d="M351.500 611L377 596.800" stroke="#aaa" stroke-width="1.200"/>
<path d="M421 587.500Q425 591 422 595Q418 599 419.500 603M424.500 590.500Q429 594 426 598Q422.500 602 424.500 607" stroke="#555" stroke-width="2.200"/><path d="M421 587.500Q425 591 422 595Q418 599 419.500 603M424.500 590.500Q429 594 426 598Q422.500 602 424.500 607" stroke="#fff" stroke-width=".9"/>
<path class="l" d="M436.800 634.900V657.500"/><text x="431" y="670">12</text>
<!-- box 13a -->
<rect class="k" x="458" y="585.200" width="76" height="172.500" stroke-width="1.400"/><text x="463.500" y="598">13a</text>
<path d="M520.0 592.5 Q505.0 592.5 498.0 599.0 L476.7 623.0 L463.3 635.0 Q460.0 640.0 463.0 643.5 Q466.0 646.5 472.0 643.5 L506.0 624.3 L519.0 614.0 Q526.0 610.5 529.0 614.5 Q531.5 620.0 527.0 627.0 Q523.0 633.0 500.7 644.9 Q492.0 648.0 487.0 643.5 Q482.0 638.0 484.0 629.0 Q488.0 617.0 503.3 604.3 Q510.0 600.0 524.0 599.5" stroke="#222" stroke-width="3.200"/><path d="M520.0 592.5 Q505.0 592.5 498.0 599.0 L476.7 623.0 L463.3 635.0 Q460.0 640.0 463.0 643.5 Q466.0 646.5 472.0 643.5 L506.0 624.3 L519.0 614.0 Q526.0 610.5 529.0 614.5 Q531.5 620.0 527.0 627.0 Q523.0 633.0 500.7 644.9 Q492.0 648.0 487.0 643.5 Q482.0 638.0 484.0 629.0 Q488.0 617.0 503.3 604.3 Q510.0 600.0 524.0 599.5" stroke="#fff" stroke-width="1.400"/>
<path d="M511.0 646.5 Q503.0 648.0 498.0 653.0 L476.7 677.0 L463.3 689.0 Q460.0 694.0 463.0 697.5 Q466.0 700.5 472.0 697.5 L506.0 678.3 L519.0 668.0 Q526.0 664.5 529.0 668.5 Q531.5 674.0 527.0 681.0 Q523.0 687.0 500.7 698.9 Q492.0 702.0 487.0 697.5 Q482.0 692.0 484.0 683.0 Q488.0 671.0 503.3 658.3 Q510.0 654.0 524.0 653.5" stroke="#222" stroke-width="3.200"/><path d="M511.0 646.5 Q503.0 648.0 498.0 653.0 L476.7 677.0 L463.3 689.0 Q460.0 694.0 463.0 697.5 Q466.0 700.5 472.0 697.5 L506.0 678.3 L519.0 668.0 Q526.0 664.5 529.0 668.5 Q531.5 674.0 527.0 681.0 Q523.0 687.0 500.7 698.9 Q492.0 702.0 487.0 697.5 Q482.0 692.0 484.0 683.0 Q488.0 671.0 503.3 658.3 Q510.0 654.0 524.0 653.5" stroke="#fff" stroke-width="1.400"/>
<path d="M513.0 700.0 Q503.0 702.0 498.0 706.0 L476.7 730.0 L463.3 742.0 Q460.0 747.0 463.0 750.5 Q466.0 753.5 472.0 750.5 L506.0 731.3 L519.0 721.0 Q526.0 717.5 529.0 721.5 Q531.5 727.0 527.0 734.0 Q523.0 740.0 500.7 751.9 Q492.0 755.0 487.0 750.5 Q482.0 745.0 484.0 736.0 Q488.0 724.0 503.3 711.3 Q510.0 707.0 524.0 706.5" stroke="#222" stroke-width="3.200"/><path d="M513.0 700.0 Q503.0 702.0 498.0 706.0 L476.7 730.0 L463.3 742.0 Q460.0 747.0 463.0 750.5 Q466.0 753.5 472.0 750.5 L506.0 731.3 L519.0 721.0 Q526.0 717.5 529.0 721.5 Q531.5 727.0 527.0 734.0 Q523.0 740.0 500.7 751.9 Q492.0 755.0 487.0 750.5 Q482.0 745.0 484.0 736.0 Q488.0 724.0 503.3 711.3 Q510.0 707.0 524.0 706.5" stroke="#fff" stroke-width="1.400"/>
<path d="M521.0 591.5l3.500-2q3-.5 3 2q-1 3-4.500 3z" stroke="#111" stroke-width="1.300" fill="#fff"/><path d="M520.0 592.5l-4 1.500" stroke="#111" stroke-width="2.500"/>
<path d="M525.0 598.5l3.500-2q3-.5 3 2q-1 3-4.500 3z" stroke="#111" stroke-width="1.300" fill="#fff"/><path d="M524.0 599.5l-4 1.500" stroke="#111" stroke-width="2.500"/>
<path d="M525.0 652.5l3.500-2q3-.5 3 2q-1 3-4.500 3z" stroke="#111" stroke-width="1.300" fill="#fff"/><path d="M524.0 653.5l-4 1.500" stroke="#111" stroke-width="2.500"/>
<path d="M525.0 705.5l3.500-2q3-.5 3 2q-1 3-4.500 3z" stroke="#111" stroke-width="1.300" fill="#fff"/><path d="M524.0 706.5l-4 1.500" stroke="#111" stroke-width="2.500"/>
<ellipse cx="509.200" cy="620.900" rx="2.800" ry="4.300" transform="rotate(-35 509.200 620.900)" stroke="#111" stroke-width="1.200" fill="#fff"/>
<path d="M512 699.500l7-2.300.8 2.600-7 2.300z" stroke="#111" stroke-width="1" fill="#fff"/>
<text x="488.500" y="784.500" font-family="Liberation Serif, serif" font-weight="bold" font-size="9.500" textLength="44" lengthAdjust="spacingAndGlyphs" fill="#111" style="stroke:#111;stroke-width:.5px">VOLVO</text>
<text x="496.500" y="790.800" font-size="3.800" font-weight="bold" textLength="28" lengthAdjust="spacingAndGlyphs" fill="#222">GENUINE PARTS</text>
<text x="486.500" y="802.500" font-family="DejaVu Sans Condensed, DejaVu Sans, sans-serif" font-size="9.500" textLength="44" lengthAdjust="spacingAndGlyphs" fill="#333">GR-338286</text>
</svg>
<!--DIAGRAM_END-->
</div>
<svg class="a" style="left:41px;top:817px" width="92" height="18" fill="none" stroke="#000" stroke-width="1.3">
<path d="M1.5 9.5L8 2.5l6.5 7M3 9v6.5h11V9M6.5 15.500v-4.500h3v4.500M11.500 6v-3.500h1.500v5" stroke-width="1.200"/>
<path d="M24 16.500l-4.500-6.500 1.500-1 2 1.500-1-6.500 1.500-.5 1.500 4-.2-5 1.600-.3 1 5 .6-4.400 1.500.2.300 5 1.200-3 1.300.5-1 6.500-1.500 4.500" stroke-width="1.100"/>
<rect x="40.750" y="4.750" width="11" height="9" stroke-width="1.500"/><rect x="40" y="4" width="12.500" height="3" fill="#000" stroke="none"/><rect x="44.500" y="9" width="3.500" height="3" stroke-width="1.200"/>
<circle cx="62" cy="7" r="4.600" stroke-width="1.300"/><path d="M65.500 10.500l5 5" stroke-width="2"/><path d="M59.500 7h5M62 4.500v5" stroke-width="1.800"/>
<circle cx="80.500" cy="7" r="4.600" stroke-width="1.300"/><path d="M84 10.500l5 5" stroke-width="2"/><path d="M78 7h5" stroke-width="1.800"/>
</svg>
<style>
.r{position:absolute;left:974px;width:427px}
.r.bl{background:#dce7ef}
.g{position:absolute;left:974px;width:8px;background:#b2d885}
.t{position:absolute;line-height:13px;white-space:nowrap;letter-spacing:.2px;color:#111}
.t.s{color:#5b6788}
.cb{position:absolute;left:994px;width:11px;height:11px;border:1px solid #1c5180;background:linear-gradient(135deg,#dcdcd7,#f3f3ef 50%,#fff)}
.th{position:absolute;top:267px;height:26px;background:#c9d6dc}
.tht{position:absolute;font-weight:bold;letter-spacing:.4px;line-height:13px;white-space:nowrap;color:#111}
</style>
<div class="tht" style="left:977px;top:231px">89 : Tools and jack</div>
<div class="tht" style="left:1325px;top:219px">PRINT</div>
<svg class="a" style="left:1315px;top:219px" width="5" height="9"><g fill="#333"><rect x="0" y="0" width="1" height="1"/><rect x="0" y="2" width="1" height="1"/><rect x="0" y="4" width="1" height="1"/><rect x="0" y="6" width="1" height="1"/><rect x="0" y="8" width="1" height="1"/><rect x="2" y="2" width="1" height="1"/><rect x="2" y="6" width="1" height="1"/><rect x="4" y="4" width="1" height="1"/><rect x="2" y="4" width="1" height="1"/></g></svg>
<svg class="a" style="left:1315px;top:242px" width="48" height="10"><path d="M6 0v9L0 4.5zM12.5 0v9L6.5 4.5zM34 0v9l6-4.5zM40.5 0v9l6-4.5z" fill="#000"/></svg>
<div class="th" style="left:975px;width:41px"></div>
<div class="th" style="left:1018px;width:38px"></div>
<div class="th" style="left:1058px;width:167px"></div>
<div class="th" style="left:1227px;width:46px"></div>
<div class="th" style="left:1275px;width:29px"></div>
<div class="th" style="left:1306px;width:94px"></div>
<div class="tht" style="left:1025px;top:274px">Fig.</div>
<div class="tht" style="left:1104px;top:274px">Description</div>
<div class="tht" style="left:1237px;top:274px">Qty.</div>
<div class="tht" style="left:1281px;top:274px">PS</div>
<div class="tht" style="left:1331px;top:268px">Part</div>
<div class="a" style="left:1306px;top:280px;width:94px;height:13px;overflow:hidden"><div class="tht" style="left:14px;top:0">number</div></div>
<div class="a" style="left:974px;top:293px;width:427px;height:7px;overflow:hidden;background:#fff"><div class="g" style="left:0;top:0;height:7px"></div><div class="cb" style="left:20px;top:-9px"></div><div class="t" style="left:51px;top:-5px">8</div><div class="t" style="left:90px;top:-10px">Tools set, x</div><div class="t" style="left:259px;top:-5px">1.00</div><div class="t" style="left:338px;top:-5px">8625704</div></div>
<div class="r bl" style="top:300px;height:20px"></div>
<div class="g" style="top:293px;height:27px"></div>
<div class="cb" style="top:304px"></div>
<div class="t" style="left:1025px;top:308px">9</div>
<div class="t" style="left:1233px;top:308px">1.00</div>
<div class="t" style="left:1312px;top:308px">9492798</div>
<div class="t" style="left:1064px;top:308px">Anchorage, spare wheel</div>
<div class="r" style="top:320px;height:20px"></div>
<div class="cb" style="top:324px"></div>
<div class="t" style="left:1025px;top:328px">9a</div>
<div class="t" style="left:1233px;top:328px">1.00</div>
<div class="t" style="left:1312px;top:328px">3526128</div>
<div class="t" style="left:1097px;top:324px">Nut</div>
<div class="a" style="left:1073px;top:328px;width:4px;height:4px;border-radius:2px;background:#f26a2a"></div>
<div class="r bl" style="top:340px;height:33px"></div>
<div class="g" style="top:340px;height:33px"></div>
<div class="cb" style="top:344px"></div>
<div class="t" style="left:1025px;top:348px">10</div>
<div class="t" style="left:1233px;top:348px">1.00</div>
<div class="t" style="left:1312px;top:348px">8626131</div>
<div class="t" style="left:1064px;top:348px">Anchorage, spare wheel</div>
<div class="t s" style="left:1071px;top:361px">V70</div>
<div class="r" style="top:373px;height:33px"></div>
<div class="cb" style="top:377px"></div>
<div class="t" style="left:1233px;top:381px">1.00</div>
<div class="t" style="left:1312px;top:381px">8626131</div>
<div class="t" style="left:1064px;top:381px">Anchorage, spare wheel</div>
<div class="t s" style="left:1071px;top:394px">V70XC,XC70</div>
<div class="r bl" style="top:406px;height:33px"></div>
<div class="g" style="top:406px;height:33px"></div>
<div class="cb" style="top:410px"></div>
<div class="t" style="left:1025px;top:414px">10a</div>
<div class="t" style="left:1233px;top:414px">1.00</div>
<div class="t" style="left:1312px;top:414px">30666252</div>
<div class="t" style="left:1064px;top:414px">Nut set, spare wheel</div>
<div class="t s" style="left:1071px;top:427px">(8626132)</div>
<div class="r" style="top:439px;height:33px"></div>
<div class="cb" style="top:443px"></div>
<div class="t" style="left:1233px;top:447px">1.00</div>
<div class="t" style="left:1312px;top:447px">30639833</div>
<div class="t" style="left:1064px;top:447px">Nut set, spare wheel</div>
<div class="t s" style="left:1071px;top:460px">V70XC</div>
<div class="r bl" style="top:472px;height:20px"></div>
<div class="g" style="top:472px;height:20px"></div>
<div class="cb" style="top:476px"></div>
<div class="t" style="left:1025px;top:480px">10b</div>
<div class="t" style="left:1233px;top:480px">1.00</div>
<div class="t" style="left:1312px;top:480px">9159082</div>
<div class="t" style="left:1064px;top:480px">Screw, spare wheel</div>
<div class="r" style="top:492px;height:20px"></div>
<div class="cb" style="top:496px"></div>
<div class="t" style="left:1025px;top:500px">11</div>
<div class="t" style="left:1233px;top:500px">1.00</div>
<div class="t" style="left:1312px;top:500px">982467</div>
<div class="t" style="left:1064px;top:500px">Combination screwdriver</div>
<div class="r bl" style="top:512px;height:20px"></div>
<div class="cb" style="top:516px"></div>
<div class="t" style="left:1025px;top:520px">12</div>
<div class="t" style="left:1233px;top:520px">1.00</div>
<div class="t" style="left:1312px;top:520px">3524207</div>
<div class="t" style="left:1064px;top:520px">Tool casing, short</div>
<div class="r" style="top:532px;height:20px"></div>
<div class="cb" style="top:536px"></div>
<div class="t" style="left:1233px;top:540px">1.00</div>
<div class="t" style="left:1312px;top:540px">30666184</div>
<div class="t" style="left:1064px;top:540px">Tool casing, long</div>
<div class="r bl" style="top:552px;height:20px"></div>
<div class="cb" style="top:556px"></div>
<div class="t" style="left:1025px;top:560px">13</div>
<div class="t" style="left:1233px;top:560px">1.00</div>
<div class="t" style="left:1312px;top:560px">9485303</div>
<div class="t" style="left:1064px;top:560px">Bag, spare wheel</div>
<div class="r" style="top:572px;height:33px"></div>
<div class="cb" style="top:576px"></div>
<div class="t" style="left:1233px;top:580px">1.00</div>
<div class="t" style="left:1312px;top:580px">31201449</div>
<div class="t" style="left:1064px;top:580px">Bag, full size, spare wheel</div>
<div class="t s" style="left:1071px;top:593px">(IN)</div>
<div class="r bl" style="top:605px;height:39px"></div>
<div class="cb" style="top:615px"></div>
<div class="t" style="left:1025px;top:619px">13a</div>
<div class="t" style="left:1233px;top:619px">1.00</div>
<div class="t" style="left:1312px;top:619px">31201451</div>
<div class="t" style="left:1064px;top:606px">Strap, full size, spare</div>
<div class="t" style="left:1064px;top:619px">wheel</div>
<div class="t s" style="left:1071px;top:632px">(IN)</div>
<div class="r" style="top:644px;height:20px"></div>
<div class="cb" style="top:648px"></div>
<div class="t" style="left:1025px;top:652px">14</div>
<div class="t" style="left:1233px;top:652px">1.00</div>
<div class="t" style="left:1312px;top:652px">8672298</div>
<div class="t" style="left:1064px;top:652px">Box, jack</div>
<div class="r bl" style="top:664px;height:33px"></div>
<div class="cb" style="top:668px"></div>
<div class="t" style="left:1025px;top:672px">15</div>
<div class="t" style="left:1233px;top:672px">1.00</div>
<div class="t" style="left:1312px;top:672px">8674281</div>
<div class="t" style="left:1064px;top:672px">Box</div>
<div class="t s" style="left:1071px;top:685px">BI-FUEL</div>
<div class="a" style="left:1401px;top:266px;width:14px;height:14px;border:1px solid #000;background:#fff"></div>
<div class="a" style="left:1405px;top:271px;width:0;height:0;border-bottom:4px solid #000;border-left:4px solid transparent;border-right:4px solid transparent"></div>
<div class="a" style="left:1401px;top:495px;width:14px;height:202px;border:1px solid #000;background:#fff"></div>
<div class="a" style="left:1401px;top:700px;width:14px;height:14px;border:1px solid #000;background:#fff"></div>
<div class="a" style="left:1405px;top:706px;width:0;height:0;border-top:4px solid #000;border-left:4px solid transparent;border-right:4px solid transparent"></div>
<svg class="a" style="left:1182px;top:729px" width="5" height="9"><g fill="#333"><rect x="0" y="0" width="1" height="1"/><rect x="0" y="2" width="1" height="1"/><rect x="0" y="4" width="1" height="1"/><rect x="0" y="6" width="1" height="1"/><rect x="0" y="8" width="1" height="1"/><rect x="2" y="2" width="1" height="1"/><rect x="2" y="6" width="1" height="1"/><rect x="4" y="4" width="1" height="1"/><rect x="2" y="4" width="1" height="1"/></g></svg>
<div class="tht" style="left:1193px;top:728px">ADD TO LIST</div>
<div class="a" style="left:1291px;top:721px;width:115px;height:19px;border:1px solid #7f9db9;background:#fff"></div>
<div class="a nw" style="left:1296px;top:724px;font:13px/16px 'Liberation Sans',sans-serif;color:#222">New parts list 1</div>
<div class="a" style="left:1391px;top:723px;width:15px;height:17px;border-radius:2px;background:linear-gradient(#e2eafd,#c3d3fb 50%,#aec3f7);box-shadow:inset 0 0 0 1px #b5c7f5"></div>
<svg class="a" style="left:1394px;top:729px" width="10" height="7"><path d="M1 1l4 4 4-4" stroke="#4d6185" stroke-width="2" fill="none"/></svg>
<div class="a" style="left:974px;top:765px;width:444px;height:10px;background:#737781"></div>
<div class="tab sel" style="left:974px;top:746px;width:200px;height:20px;line-height:20px"><span style="top:1px">DETAILS</span></div>
<div class="tab" style="left:1178px;top:746px;width:240px;height:19px;line-height:19px"><span style="top:1px">COMMENTS</span></div>

<div class="a" style="left:1421px;top:148px;width:17px;height:693px;background:linear-gradient(90deg,#f3f1ec,#fefefb)"></div>
<div class="a" style="left:1422px;top:149px;width:15px;height:16px;border-radius:2px;background:linear-gradient(135deg,#dfe8fd,#bccdfa);box-shadow:0 0 0 1px #fff,inset 0 0 0 1px #b7c8f5"></div>
<svg class="a" style="left:1425px;top:153px" width="10" height="8"><path d="M1 6l4-4 4 4" stroke="#4d6185" stroke-width="2.200" fill="none"/></svg>
<div class="a" style="left:1422px;top:191px;width:15px;height:632px;border-radius:2px;background:linear-gradient(90deg,#c9d6fc,#c3d2fc 50%,#b5c7f6);box-shadow:0 0 0 1px #fff,inset 0 0 0 1px #b4c5f3"></div>
<svg class="a" style="left:1425px;top:502px" width="9" height="9"><path d="M0 .5h8M0 2.500h8M0 4.500h8M0 6.500h8" stroke="#eef3fe" stroke-width="1"/><path d="M1 1.500h8M1 3.500h8M1 5.500h8M1 7.500h8" stroke="#8ca2dc" stroke-width="1"/></svg>
<div class="a" style="left:1422px;top:825px;width:15px;height:15px;border-radius:2px;background:linear-gradient(135deg,#dfe8fd,#bccdfa);box-shadow:0 0 0 1px #fff,inset 0 0 0 1px #b7c8f5"></div>
<svg class="a" style="left:1425px;top:829px" width="10" height="8"><path d="M1 2l4 4 4-4" stroke="#4d6185" stroke-width="2.200" fill="none"/></svg>


<style>
#status{left:0;top:841px;width:1440px;height:25px;background:#ece9d8}
.sd{position:absolute;top:847px;width:1px;height:17px;background:#c5c2b2;box-shadow:1px 0 0 #fff}
#taskbar{left:0;top:866px;width:1440px;height:34px;background:linear-gradient(#2157c8 0,#3a84ee 2px,#3a86ee 4px,#2c6ee4 6px,#2660dd 9px,#245cdb 18px,#2459d7 27px,#1f4fc4 31px,#1a43ae 34px)}
.tb{position:absolute;top:873px;width:129px;height:24px;border-radius:3px;background:linear-gradient(#5a98fa 0,#3c81f3 2px,#3a7ef0 70%,#3273e6);box-shadow:inset 0 0 0 1px rgba(255,255,255,.08),0 1px 0 rgba(0,0,40,.25)}
.tb.act{background:linear-gradient(#1b48a8 0,#1f55c2 3px,#1e52bf);box-shadow:inset 1px 1px 1px rgba(0,0,40,.4)}
.tbt{position:absolute;top:880px;color:#fff;line-height:13px}
</style>
<div class="a" id="status"></div>
<div class="a" style="left:0;top:841px;width:1440px;height:1px;background:#f4f2e8"></div><div class="a" style="left:0;top:842px;width:1440px;height:1px;background:#b7b4a4"></div><div class="a" style="left:0;top:843px;width:1440px;height:1px;background:#fbfaf5"></div>
<div class="a ui" style="left:2px;top:850px;line-height:13px">Done</div>
<div class="sd" style="left:1042px"></div>
<div class="sd" style="left:1066px"></div>
<div class="sd" style="left:1090px"></div>
<div class="sd" style="left:1114px"></div>
<div class="sd" style="left:1138px"></div>
<div class="sd" style="left:1162px"></div>
<div class="sd" style="left:1186px"></div>
<div class="sd" style="left:1340px"></div>
<svg class="a" style="left:1191px;top:848px" width="16" height="15"><path d="M1.500 8.500l4 4.500 8.500-11.500" stroke="#3dae2b" stroke-width="2.600" fill="none" stroke-linejoin="round"/></svg>
<div class="a ui" style="left:1211px;top:850px;line-height:13px">Trusted sites</div>
<svg class="a" style="left:1352px;top:847px" width="14" height="15"><path d="M8 8.500l4.500 5" stroke="#9a7a4a" stroke-width="2.400"/><circle cx="5.500" cy="5.500" r="4.300" fill="#2a6fd8" stroke="#8fb4ea" stroke-width="1.200"/><path d="M3 5.500h5M5.500 3v5" stroke="#fff" stroke-width="1.400"/></svg>
<div class="a ui" style="left:1367px;top:850px;line-height:13px">100%</div>
<div class="a" style="left:1410px;top:854px;width:0;height:0;border-top:4px solid #000;border-left:3.5px solid transparent;border-right:3.5px solid transparent"></div>
<svg class="a" style="left:1426px;top:853px" width="12" height="12"><g fill="#b8b4a0"><rect x="8" y="0" width="2" height="2"/><rect x="4" y="4" width="2" height="2"/><rect x="8" y="4" width="2" height="2"/><rect x="0" y="8" width="2" height="2"/><rect x="4" y="8" width="2" height="2"/><rect x="8" y="8" width="2" height="2"/></g><g fill="#fff"><rect x="9" y="1" width="2" height="2"/><rect x="5" y="5" width="2" height="2"/><rect x="9" y="5" width="2" height="2"/><rect x="1" y="9" width="2" height="2"/><rect x="5" y="9" width="2" height="2"/><rect x="9" y="9" width="2" height="2"/></g></svg>
<div class="a" id="taskbar"></div>
<div class="a" style="left:0;top:869px;width:97px;height:31px;border-radius:0 11px 14px 0/0 14px 17px 0;background:linear-gradient(#2c7f2c 0,#63bb63 2px,#47a647 5px,#3b9a3b 11px,#3a983a 21px,#318631 27px,#266f26 31px);box-shadow:inset -3px 0 4px rgba(0,40,0,.45),inset 1px 0 2px rgba(0,40,0,.5),1px 0 2px rgba(0,0,60,.5)"></div>
<svg class="a" style="left:11px;top:875px" width="20" height="20"><path d="M2.500 3.500c2-1.200 4-1.200 6 0l-1.200 5.500c-2-1.200-4-1.200-6 0z" fill="#e8542c"/><path d="M9.700 4c2 1.200 4 1.200 6.300 0l-1.300 5.500c-2.200 1.200-4.200 1.200-6.200 0z" fill="#7cc242"/><path d="M1 10.500c2-1.200 4-1.200 6 0l-1.200 5.500c-2-1.200-4-1.200-6 0z" fill="#3f7fe0"/><path d="M8.200 11c2 1.200 4 1.200 6.200 0l-1.300 5.500c-2.200 1.200-4.200 1.200-6.200 0z" fill="#f4c73a"/></svg>
<div class="a nw" style="left:34px;top:873px;font:italic bold 19px/24px 'Liberation Sans',sans-serif;color:#fff;letter-spacing:-.8px;text-shadow:1px 1px 1px rgba(0,40,0,.6)">start</div>
<svg class="a" style="left:106px;top:874px" width="6" height="24"><g fill="#16388f"><rect x="0" y="1" width="2" height="2"/><rect x="3" y="4" width="2" height="2"/><rect x="0" y="7" width="2" height="2"/><rect x="3" y="10" width="2" height="2"/><rect x="0" y="13" width="2" height="2"/><rect x="3" y="16" width="2" height="2"/><rect x="0" y="19" width="2" height="2"/></g><rect x="2" y="3" width="1" height="1" fill="#5a8ef2"/><rect x="5" y="6" width="1" height="1" fill="#5a8ef2"/><rect x="2" y="9" width="1" height="1" fill="#5a8ef2"/><rect x="5" y="12" width="1" height="1" fill="#5a8ef2"/><rect x="2" y="15" width="1" height="1" fill="#5a8ef2"/><rect x="5" y="18" width="1" height="1" fill="#5a8ef2"/><rect x="2" y="21" width="1" height="1" fill="#5a8ef2"/></svg>
<svg class="a" style="left:279px;top:874px" width="6" height="24"><g fill="#16388f"><rect x="0" y="1" width="2" height="2"/><rect x="3" y="4" width="2" height="2"/><rect x="0" y="7" width="2" height="2"/><rect x="3" y="10" width="2" height="2"/><rect x="0" y="13" width="2" height="2"/><rect x="3" y="16" width="2" height="2"/><rect x="0" y="19" width="2" height="2"/></g><rect x="2" y="3" width="1" height="1" fill="#5a8ef2"/><rect x="5" y="6" width="1" height="1" fill="#5a8ef2"/><rect x="2" y="9" width="1" height="1" fill="#5a8ef2"/><rect x="5" y="12" width="1" height="1" fill="#5a8ef2"/><rect x="2" y="15" width="1" height="1" fill="#5a8ef2"/><rect x="5" y="18" width="1" height="1" fill="#5a8ef2"/><rect x="2" y="21" width="1" height="1" fill="#5a8ef2"/></svg>
<svg class="a" style="left:120px;top:877px" width="18" height="16"><rect x="1" y="2" width="13" height="12" rx="2" fill="#e9f1fb" stroke="#3b73c4"/><path d="M4 11c2-6 6-6 7-2-1 3-5 3-5 0" stroke="#2a66c0" stroke-width="1.600" fill="none"/><circle cx="13" cy="4" r="1.800" fill="#e66a2a"/></svg>
<svg class="a" style="left:142px;top:877px" width="18" height="16"><rect x=".5" y="1.500" width="15" height="11" rx="1" fill="#d8262c" stroke="#222"/><rect x="2" y="3" width="12" height="7" fill="#fff"/><rect x="5" y="13" width="6" height="1.500" fill="#222"/><path d="M3 8.500l1.500-4 1.500 4M7 4.500v4h1.500a2 2 0 000-4zM11 8.500v-4h1.500a1.200 1.200 0 010 2.400H11" stroke="#d8262c" stroke-width="1" fill="none"/></svg>
<svg class="a" style="left:167px;top:877px" width="18" height="16"><rect x="1" y=".5" width="12" height="15" rx="3" fill="#b9bcc8" stroke="#1a1a1a" stroke-width="1.300"/><path d="M4 3.500l3 9 3-9" stroke="#1a1a1a" stroke-width="1.800" fill="none"/></svg>
<svg class="a" style="left:188px;top:877px" width="18" height="16"><circle cx="9" cy="8" r="6" fill="none" stroke="#8cc6ff" stroke-width="3"/><path d="M4 8h10" stroke="#8cc6ff" stroke-width="2.400"/><path d="M1 13c2-9 12-13 16-10" stroke="#f4b22c" stroke-width="1.800" fill="none"/><rect x="11" y="9.500" width="6" height="4" fill="#245cdb"/></svg>
<svg class="a" style="left:211px;top:877px" width="18" height="16"><rect x="1" y="1" width="14" height="14" rx="4" fill="#f7c873" stroke="#d8903a"/><circle cx="8" cy="8" r="4.500" fill="#fdf0d0" stroke="#d8903a"/><path d="M5.500 7l2.500 2.500L10.500 7" stroke="#c9781e" stroke-width="1.500" fill="none"/></svg>
<svg class="a" style="left:234px;top:877px" width="18" height="16"><rect x="5" y="3" width="10" height="12" fill="#e8efe6" stroke="#8aa087"/><rect x="1" y="1" width="10" height="10" fill="#2e8b3e" stroke="#1c6a2b"/><path d="M3.500 3.500l5 5M8.500 3.500l-5 5" stroke="#fff" stroke-width="1.700"/></svg>
<div class="a" style="left:262px;top:873px;color:#dfe9ff;font:bold 11px/12px 'DejaVu Sans',sans-serif;letter-spacing:-1px">»</div>
<div class="tb" style="left:289px"></div>
<svg class="a" style="left:299px;top:878px" width="18" height="16"><rect x=".7" y="1.700" width="15" height="12.600" rx="4" fill="#fff" stroke="#1b2a55" stroke-width="1.200"/><path d="M3.500 5.500l2 5 2-5M8.500 5.500h4.500M10.700 5.500v5" stroke="#1b2a55" stroke-width="1.300" fill="none"/></svg>
<div class="tbt ui" style="left:319px">206.22.69.199 ...</div>
<div class="tb act" style="left:419px"></div>
<svg class="a" style="left:429px;top:878px" width="18" height="16"><circle cx="9" cy="8" r="5.500" fill="none" stroke="#8cc6ff" stroke-width="2.800"/><path d="M4.500 8h9.500" stroke="#8cc6ff" stroke-width="2.200"/><path d="M1 13.500c1.500-9 11-13 15.500-10.500" stroke="#f4b22c" stroke-width="1.700" fill="none"/><rect x="11" y="9.300" width="6" height="3.600" fill="#1e52bf"/></svg>
<div class="tbt ui" style="left:449px">S60, 2001, B52...</div>
<div class="tb" style="left:551px"></div>
<svg class="a" style="left:561px;top:878px" width="18" height="16"><circle cx="9" cy="8" r="5.500" fill="none" stroke="#8cc6ff" stroke-width="2.800"/><path d="M4.500 8h9.500" stroke="#8cc6ff" stroke-width="2.200"/><path d="M1 13.500c1.500-9 11-13 15.500-10.500" stroke="#f4b22c" stroke-width="1.700" fill="none"/><rect x="11" y="9.300" width="6" height="3.600" fill="#3a7ef0"/></svg>
<div class="tbt ui" style="left:581px">OCTANE - Wind...</div>
<div class="tb" style="left:682px"></div>
<svg class="a" style="left:692px;top:878px" width="18" height="16"><rect x="1" y="1" width="14" height="14" rx="4" fill="#f7c873" stroke="#d8903a"/><circle cx="8" cy="8" r="4.500" fill="#fdf0d0" stroke="#d8903a"/><path d="M5.500 7l2.500 2.500L10.500 7" stroke="#c9781e" stroke-width="1.500" fill="none"/></svg>
<div class="tbt ui" style="left:712px">Inbox - Microso...</div>
<div class="tb" style="left:813px"></div>
<svg class="a" style="left:823px;top:878px" width="18" height="16"><rect x="1" y="3.500" width="14" height="9.500" fill="#f8e08a" stroke="#b8923a"/><path d="M1.500 4l6.500 5 6.500-5" stroke="#b8923a" fill="none"/></svg>
<div class="tbt ui" style="left:843px">Re: PIC - Mess...</div>
<div class="tb" style="left:944px"></div>
<svg class="a" style="left:954px;top:878px" width="18" height="16"><path d="M8 1l7 8H1z" fill="#e23a2c" stroke="#fff" stroke-width=".8"/><path d="M1 9h14l-7 6z" fill="#f0d8b0" stroke="#7a3a1a" stroke-width=".8"/><path d="M3 9h10" stroke="#fff" stroke-width="2.200" stroke-dasharray="1.500 1"/></svg>
<div class="tbt ui" style="left:974px">Parts Desktop -...</div>
<div class="tb" style="left:1076px"></div>
<svg class="a" style="left:1086px;top:878px" width="18" height="16"><ellipse cx="8" cy="8" rx="7" ry="5.500" fill="#12306e"/><ellipse cx="9" cy="8" rx="4.500" ry="3.800" fill="#7db343"/><circle cx="9.500" cy="8" r="2.300" fill="#0a1a3a"/></svg>
<div class="tbt ui" style="left:1106px">Velaro Agent D...</div>
<div class="a" style="left:1221px;top:866px;width:219px;height:34px;background:linear-gradient(#0c63c8 0,#19a1f5 2px,#1695ee 5px,#108ae6 10px,#0f86e2 24px,#0d78d2 31px,#0a5fb5 34px);box-shadow:inset 1px 0 0 #0a4aa8,inset 2px 0 1px #2fb0ff"></div>
<svg class="a" style="left:1233px;top:877px" width="17" height="16"><ellipse cx="8" cy="8" rx="7.500" ry="6" fill="#12306e"/><ellipse cx="9" cy="8" rx="4.800" ry="4" fill="#7db343"/><circle cx="9.500" cy="8" r="2.500" fill="#0a1a3a"/></svg>
<svg class="a" style="left:1250px;top:877px" width="17" height="16"><rect x="1" y="1" width="14" height="14" rx="4" fill="#f7c873" stroke="#d8903a"/><circle cx="8" cy="8" r="4.500" fill="#fdf0d0" stroke="#d8903a"/><path d="M5.500 7l2.500 2.500L10.500 7" stroke="#c9781e" stroke-width="1.500" fill="none"/></svg>
<svg class="a" style="left:1269px;top:877px" width="17" height="16"><path d="M8 .5c2 1.500 4 2 6 2 0 6-2 10-6 13-4-3-6-7-6-13 2 0 4-.5 6-2z" fill="#f6cf2a" stroke="#a67c12"/><rect x="7.200" y="4" width="1.800" height="5.500" fill="#222"/><rect x="7.200" y="10.500" width="1.800" height="1.800" fill="#222"/></svg>
<svg class="a" style="left:1287px;top:877px" width="17" height="16"><rect x="6" y="1" width="9" height="7" fill="#9cc4f0" stroke="#3a5a90"/><rect x="1" y="6" width="9" height="7" fill="#7eb0ea" stroke="#3a5a90"/><rect x="3" y="13" width="5" height="2" fill="#c8d4e4"/></svg>
<svg class="a" style="left:1305px;top:877px" width="17" height="16"><path d="M2 6h3l4-3.500v11L5 10H2z" fill="#8a8f98" stroke="#444"/><circle cx="11.500" cy="11" r="3.800" fill="#e23a2c"/><path d="M9 13.500l5-5" stroke="#fff" stroke-width="1.300"/></svg>
<svg class="a" style="left:1323px;top:877px" width="17" height="16"><rect x="1" y="1" width="14" height="14" fill="#8a3aa8"/><path d="M3 8V2.500l2.500 4 2.500-4V8" stroke="#fff" stroke-width="1.500" fill="none"/><rect x="9" y="1" width="6" height="14" fill="#e8e8f0"/><path d="M10.500 9h3.500M10.500 11.500h3M10.500 14h3.500M10.500 9v5" stroke="#333" stroke-width="1.200"/></svg>
<svg class="a" style="left:1342px;top:877px" width="17" height="16"><path d="M8 .5c2 1.500 4 2 6.500 2 0 6-2 10-6.500 13-4.500-3-6.500-7-6.500-13 2.500 0 4.500-.5 6.500-2z" fill="#f0f0f4" stroke="#3a4a80"/><path d="M4.500 4l3.500 8 3.500-8" stroke="#c8202a" stroke-width="2.400" fill="none"/></svg>
<svg class="a" style="left:1359px;top:877px" width="17" height="16"><rect x=".5" y="1" width="9" height="14" fill="#e8e8e8" stroke="#111" stroke-width="1.200"/><rect x="2.500" y="3" width="2" height="10" fill="#111"/><circle cx="10.500" cy="9" r="5" fill="#fff" stroke="#111" stroke-width="1.300"/><path d="M9 6.500v5l4-2.500z" fill="#2fa82f"/></svg>
<div class="a ui" style="left:1383px;top:880px;line-height:13px;color:#fff">9:40 AM</div>

<!--TASKBAR-->
</body></html>
